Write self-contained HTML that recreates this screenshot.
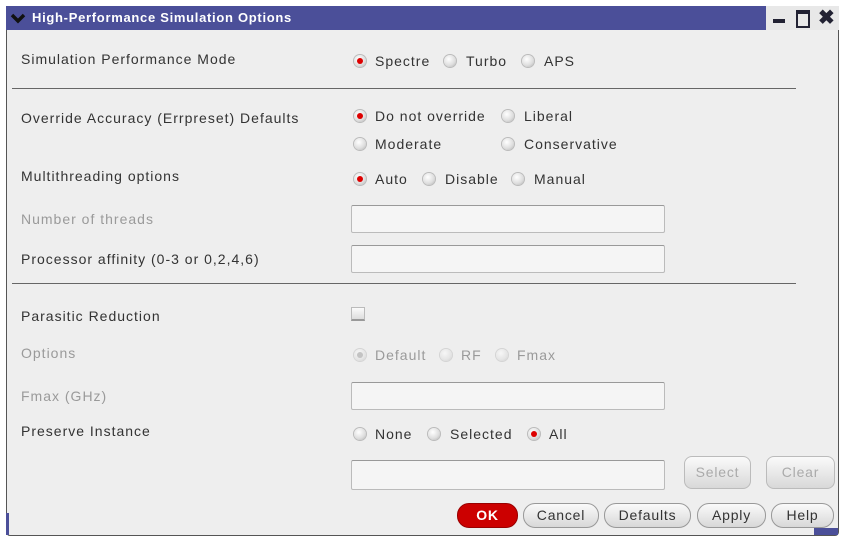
<!DOCTYPE html><html><head><style>
body{margin:0;width:846px;height:543px;background:#fff;font-family:"Liberation Sans",sans-serif;position:relative;overflow:hidden}
.win{position:absolute;left:6px;top:6px;width:833px;height:530px;background:#eeeeee;border:1px solid #555;border-radius:3px 6px 4px 4px;box-sizing:border-box}
.tb{position:absolute;left:6px;top:6px;width:760px;height:24px;background:#4b4f99}
.tb span{position:absolute;left:26px;top:4px;color:#fff;font-weight:bold;font-size:13px;letter-spacing:0.7px}
.t{position:absolute;font-size:14px;color:#333;white-space:nowrap;letter-spacing:1px}
.d{color:#9a9a9a}
.r{position:absolute;width:12px;height:12px;border-radius:50%;background:radial-gradient(circle at 40% 35%,#fff,#ddd 60%,#aaa);box-shadow:0 0 0 1px #bbb}
.r.on::after{content:"";position:absolute;left:3px;top:3px;width:6px;height:6px;border-radius:50%;background:#d00}
.r.g::after{content:"";position:absolute;left:3px;top:3px;width:6px;height:6px;border-radius:50%;background:#999}
.r.dis{opacity:.5}
.hr{position:absolute;left:12px;width:784px;height:1px;background:#666}
.in{position:absolute;left:351px;width:314px;height:28px;background:#f5f5f5;border:1px solid #bbb;border-top-color:#999;box-sizing:border-box;border-radius:2px}
.b{position:absolute;height:25px;border-radius:12px;background:linear-gradient(#fafafa,#d8d8d8);border:1px solid #999;box-sizing:border-box;font-size:14px;color:#333;text-align:center;line-height:23px;letter-spacing:0.8px}
</style></head><body>
<div class="win"></div>
<div class="tb"><svg style="position:absolute;left:4px;top:6px" width="16" height="12"><path d="M2 3l6 6 6-6" stroke="#111" stroke-width="3.5" fill="none"/></svg><span>High-Performance Simulation Options</span></div>
<div style="position:absolute;left:766px;top:6px;width:73px;height:24px;background:#e8e8e8"></div>
<div style="position:absolute;left:773px;top:19px;width:12px;height:4px;background:#223"></div>
<div style="position:absolute;left:796px;top:10px;width:10px;height:12px;border:2px solid #223;border-top-width:4px"></div>
<div style="position:absolute;left:818px;top:5px;font-size:20px;font-weight:bold;color:#223">✖</div>

<div class="t" style="left:21px;top:51px">Simulation Performance Mode</div>
<div class="r on" style="left:354px;top:55px"></div><div class="t" style="left:375px;top:53px">Spectre</div>
<div class="r" style="left:444px;top:55px"></div><div class="t" style="left:466px;top:53px">Turbo</div>
<div class="r" style="left:522px;top:55px"></div><div class="t" style="left:544px;top:53px">APS</div>
<div class="hr" style="top:88px"></div>

<div class="t" style="left:21px;top:110px">Override Accuracy (Errpreset) Defaults</div>
<div class="r on" style="left:354px;top:110px"></div><div class="t" style="left:375px;top:108px">Do not override</div>
<div class="r" style="left:502px;top:110px"></div><div class="t" style="left:524px;top:108px">Liberal</div>
<div class="r" style="left:354px;top:138px"></div><div class="t" style="left:375px;top:136px">Moderate</div>
<div class="r" style="left:502px;top:138px"></div><div class="t" style="left:524px;top:136px">Conservative</div>

<div class="t" style="left:21px;top:168px">Multithreading options</div>
<div class="r on" style="left:354px;top:173px"></div><div class="t" style="left:375px;top:171px">Auto</div>
<div class="r" style="left:423px;top:173px"></div><div class="t" style="left:445px;top:171px">Disable</div>
<div class="r" style="left:512px;top:173px"></div><div class="t" style="left:534px;top:171px">Manual</div>

<div class="t d" style="left:21px;top:211px">Number of threads</div>
<div class="in" style="top:205px"></div>
<div class="t" style="left:21px;top:251px">Processor affinity (0-3 or 0,2,4,6)</div>
<div class="in" style="top:245px"></div>
<div class="hr" style="top:283px"></div>

<div class="t" style="left:21px;top:308px">Parasitic Reduction</div>
<div style="position:absolute;left:351px;top:307px;width:14px;height:14px;background:linear-gradient(#fafafa,#ddd);border:1px solid #bbb;border-bottom:2px solid #999;box-sizing:border-box"></div>
<div class="t d" style="left:21px;top:345px">Options</div>
<div class="r g dis" style="left:354px;top:349px"></div><div class="t d" style="left:375px;top:347px">Default</div>
<div class="r dis" style="left:440px;top:349px"></div><div class="t d" style="left:461px;top:347px">RF</div>
<div class="r dis" style="left:496px;top:349px"></div><div class="t d" style="left:517px;top:347px">Fmax</div>
<div class="t d" style="left:21px;top:388px">Fmax (GHz)</div>
<div class="in" style="top:382px"></div>
<div class="t" style="left:21px;top:423px">Preserve Instance</div>
<div class="r" style="left:354px;top:428px"></div><div class="t" style="left:375px;top:426px">None</div>
<div class="r" style="left:428px;top:428px"></div><div class="t" style="left:450px;top:426px">Selected</div>
<div class="r on" style="left:528px;top:428px"></div><div class="t" style="left:549px;top:426px">All</div>
<div class="in" style="top:460px;height:30px"></div>
<div class="b" style="left:684px;top:456px;width:67px;height:33px;line-height:31px;color:#aaa;border-radius:8px;border-color:#bbb">Select</div>
<div class="b" style="left:766px;top:456px;width:69px;height:33px;line-height:31px;color:#aaa;border-radius:8px;border-color:#bbb">Clear</div>

<div class="b" style="left:457px;top:503px;width:61px;background:#c00;border-color:#900;color:#fff;font-weight:bold">OK</div>
<div class="b" style="left:523px;top:503px;width:76px">Cancel</div>
<div class="b" style="left:604px;top:503px;width:87px">Defaults</div>
<div class="b" style="left:697px;top:503px;width:69px">Apply</div>
<div class="b" style="left:771px;top:503px;width:63px">Help</div>
<div style="position:absolute;left:6px;top:513px;width:3px;height:22px;background:#4b4f99"></div>
<div style="position:absolute;left:814px;top:528px;width:24px;height:7px;background:#4b4f99"></div>
</body></html>
